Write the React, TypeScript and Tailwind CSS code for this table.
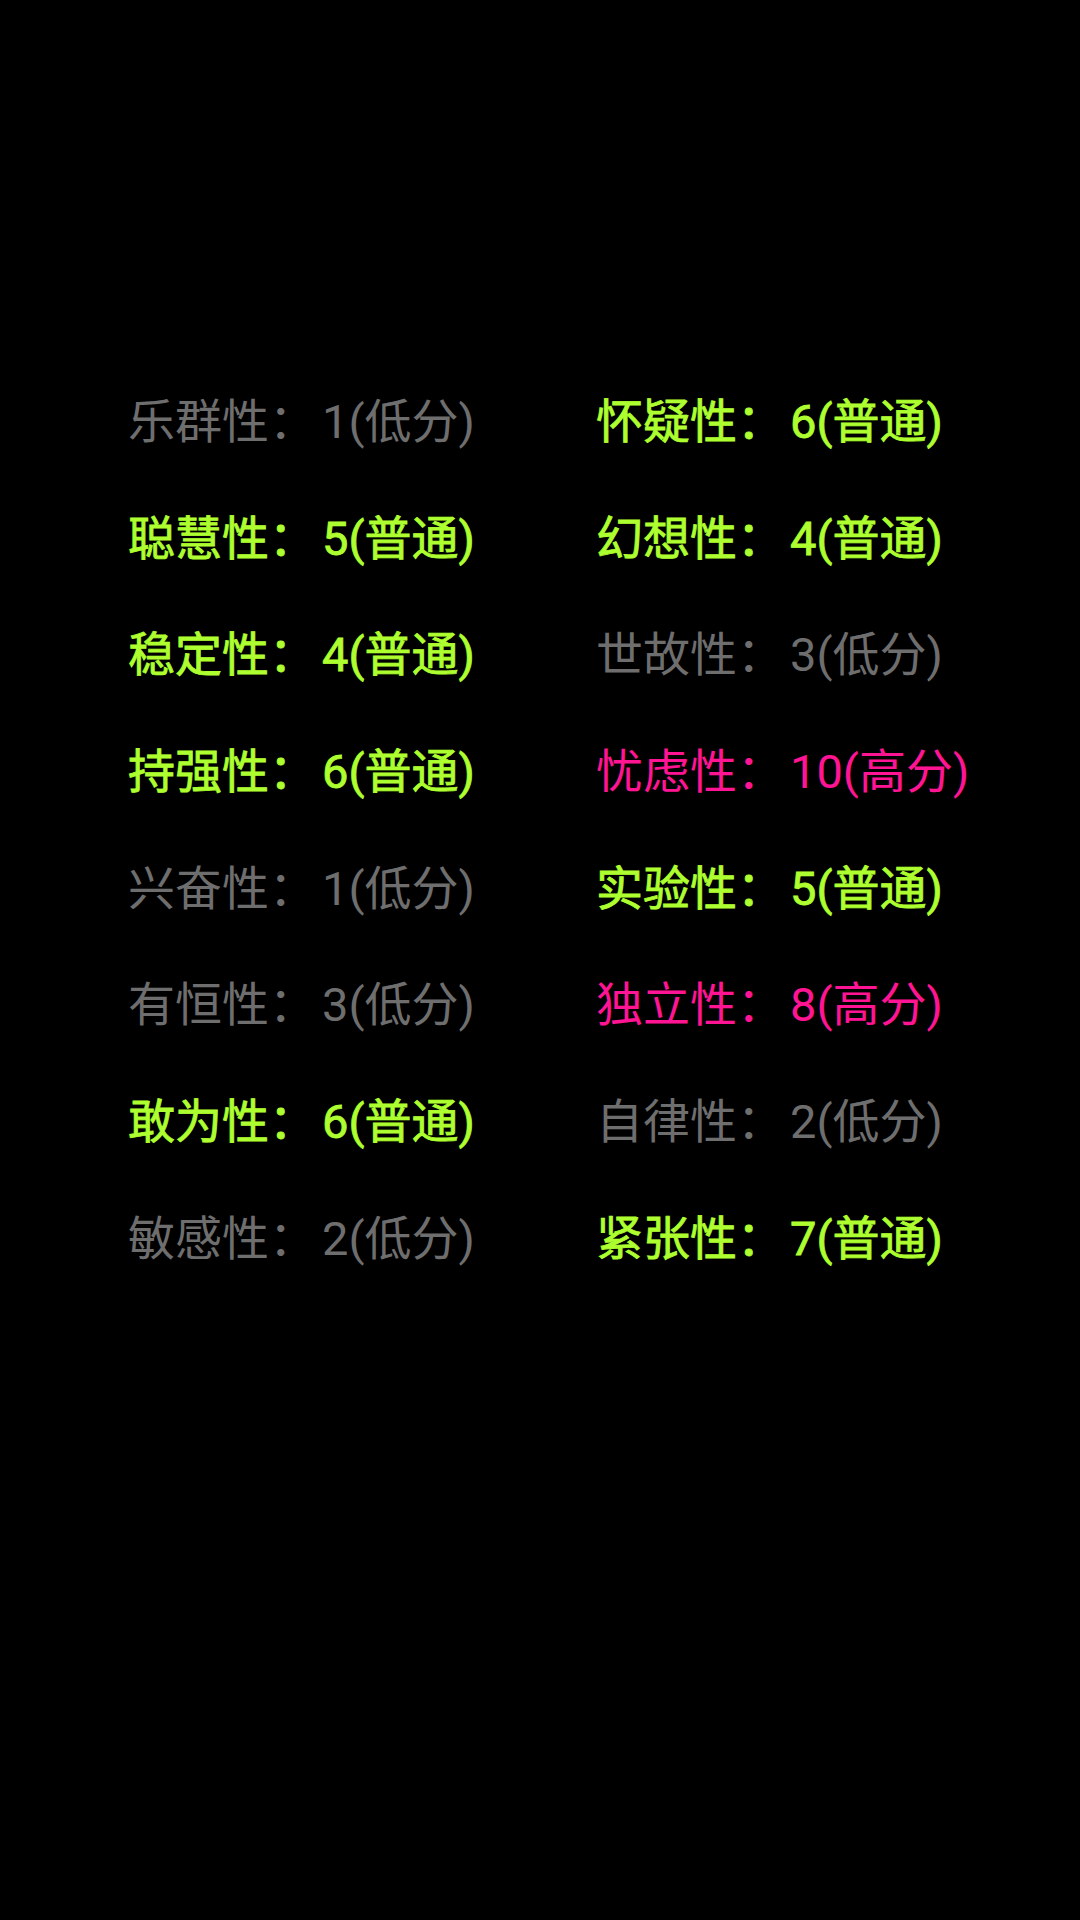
const GRAY = "text-[#6e6e6e]";
const GREEN = "text-[#adff2f] [-webkit-text-stroke:0.8px_#adff2f]";
const PINK = "text-[#ff1493]";

type Trait = { name: string; score: number; level: "低分" | "普通" | "高分" };

const LEFT: Trait[] = [
  { name: "乐群性", score: 1, level: "低分" },
  { name: "聪慧性", score: 5, level: "普通" },
  { name: "稳定性", score: 4, level: "普通" },
  { name: "持强性", score: 6, level: "普通" },
  { name: "兴奋性", score: 1, level: "低分" },
  { name: "有恒性", score: 3, level: "低分" },
  { name: "敢为性", score: 6, level: "普通" },
  { name: "敏感性", score: 2, level: "低分" },
];

const RIGHT: Trait[] = [
  { name: "怀疑性", score: 6, level: "普通" },
  { name: "幻想性", score: 4, level: "普通" },
  { name: "世故性", score: 3, level: "低分" },
  { name: "忧虑性", score: 10, level: "高分" },
  { name: "实验性", score: 5, level: "普通" },
  { name: "独立性", score: 8, level: "高分" },
  { name: "自律性", score: 2, level: "低分" },
  { name: "紧张性", score: 7, level: "普通" },
];

function color(level: Trait["level"]) {
  return level === "低分" ? GRAY : level === "高分" ? PINK : GREEN;
}

function Cell({ t }: { t: Trait }) {
  return (
    <div className={"h-[116.7px] leading-[116.7px] whitespace-nowrap " + color(t.level)}>
      {t.name}：<span className="ml-[6px]">{t.score}({t.level})</span>
    </div>
  );
}

export default function App() {
  const rows = LEFT.map((l, i) => [l, RIGHT[i]] as const);
  return (
    <div
      className="min-h-[1920px] w-[1080px] bg-black pt-[364px] pl-[128px] text-[47px]"
      style={{ fontFamily: 'Roboto, "Noto Sans CJK SC", sans-serif' }}
    >
      <div className="grid grid-cols-[468px_auto]">
        {rows.map(([l, r]) => (
          <div key={l.name} className="contents">
            <Cell t={l} />
            <Cell t={r} />
          </div>
        ))}
      </div>
    </div>
  );
}
